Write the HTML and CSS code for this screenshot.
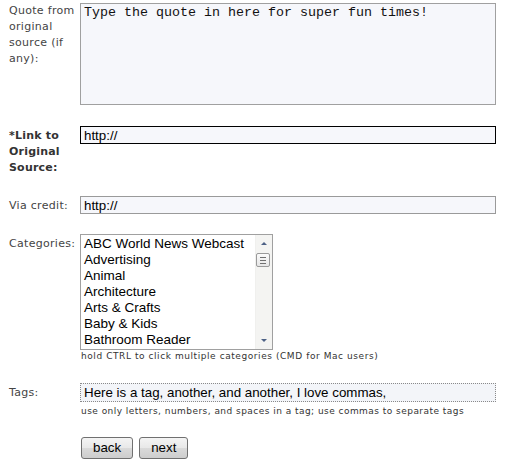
FILE: index.html
```html
<!DOCTYPE html>
<html>
<head>
<meta charset="utf-8">
<link rel="stylesheet" href="styles.css">
</head>
<body>
<form class="form">
  <div class="row row-quote">
    <label class="lbl">Quote from original source (if any):</label>
    <div class="field">
      <textarea class="quote">Type the quote in here for super fun times!</textarea>
    </div>
  </div>
  <div class="row row-link">
    <label class="lbl lbl-bold">*Link to Original Source:</label>
    <div class="field">
      <input class="txt txt-active" type="text" value="http://">
    </div>
  </div>
  <div class="row row-via">
    <label class="lbl lbl-pad">Via credit:</label>
    <div class="field">
      <input class="txt" type="text" value="http://">
    </div>
  </div>
  <div class="row row-cat">
    <label class="lbl lbl-pad">Categories:</label>
    <div class="field">
      <div class="listbox">
        <ul class="options">
          <li>ABC World News Webcast</li>
          <li>Advertising</li>
          <li>Animal</li>
          <li>Architecture</li>
          <li>Arts &amp; Crafts</li>
          <li>Baby &amp; Kids</li>
          <li>Bathroom Reader</li>
        </ul>
        <div class="scrollbar">
          <div class="arrow arrow-up"></div>
          <div class="track">
            <div class="thumb"><span></span><span></span><span></span></div>
          </div>
          <div class="arrow arrow-down"></div>
        </div>
      </div>
      <div class="hint">hold CTRL to click multiple categories (CMD for Mac users)</div>
    </div>
  </div>
  <div class="row row-tags">
    <label class="lbl lbl-pad">Tags:</label>
    <div class="field">
      <input class="txt tags" type="text" value="Here is a tag, another, and another, I love commas,">
      <div class="hint hint-tags">use only letters, numbers, and spaces in a tag; use commas to separate tags</div>
    </div>
  </div>
  <div class="row row-buttons">
    <div class="lbl"></div>
    <div class="field buttons">
      <button type="button" class="btn">back</button>
      <button type="button" class="btn">next</button>
    </div>
  </div>
</form>
</body>
</html>
```

FILE: styles.css
```css
html, body {
  margin: 0;
  padding: 0;
  background: #ffffff;
}

.form {
  padding: 3px 0 0 9px;
  font-family: "DejaVu Sans", Verdana, sans-serif;
  font-size: 11px;
  line-height: 16px;
  color: #444444;
}

.row {
  display: flex;
  align-items: flex-start;
}

.lbl {
  flex: 0 0 71px;
  box-sizing: border-box;
  padding-right: 1px;
  letter-spacing: 0.3px;
}

.lbl-bold {
  font-weight: bold;
  color: #333333;
  padding-top: 2px;
  letter-spacing: 0.2px;
}

.lbl-pad {
  padding-top: 2px;
}

.field {
  width: 416px;
}

.row-link { margin-top: 21px; }
.row-via { margin-top: 20px; }
.row-cat { margin-top: 20px; }
.row-tags { margin-top: 21px; }
.row-buttons { margin-top: 20px; }

.quote {
  display: block;
  box-sizing: border-box;
  width: 416px;
  height: 102px;
  margin: 0;
  padding: 1px 3px;
  border: 1px solid #a0a0a0;
  background: #f6f7fb;
  font-family: "Liberation Mono", "Courier New", monospace;
  font-size: 13.33px;
  line-height: 15px;
  color: #111111;
  resize: none;
  outline: none;
}

.txt {
  display: block;
  box-sizing: border-box;
  width: 416px;
  height: 18px;
  margin: 0;
  padding: 0 3px;
  border: 1px solid #9a9a9a;
  background: #f6f7fb;
  font-family: "Liberation Sans", Arial, sans-serif;
  font-size: 13.33px;
  color: #000000;
  outline: none;
}

.txt-active {
  border-color: #000000;
}

.tags {
  height: 19px;
  border: 1px dotted #8a8a8a;
  background: #f3f5f9;
}

.listbox {
  display: flex;
  box-sizing: border-box;
  width: 193px;
  height: 116px;
  border: 1px solid #a0a0a0;
  background: #ffffff;
}

.options {
  flex: 1;
  margin: 0;
  padding: 1px 0 0 3px;
  list-style: none;
  font-family: "Liberation Sans", Arial, sans-serif;
  font-size: 13.5px;
  line-height: 16px;
  color: #000000;
  white-space: nowrap;
  overflow: hidden;
}

.scrollbar {
  display: flex;
  flex-direction: column;
  width: 16px;
  background: #f4f4f2;
  border-left: 1px solid #f0f0ee;
}

.arrow {
  height: 16px;
  position: relative;
}

.arrow::after {
  content: "";
  position: absolute;
  left: 5px;
  width: 0;
  height: 0;
  border-left: 3px solid transparent;
  border-right: 3px solid transparent;
}

.arrow-up::after {
  top: 7px;
  border-bottom: 3px solid #4d6185;
}

.arrow-down::after {
  top: 6px;
  border-top: 3px solid #4d6185;
}

.track {
  flex: 1;
  padding-top: 2px;
}

.thumb {
  box-sizing: border-box;
  width: 14px;
  height: 14px;
  border: 1px solid #9a9a9a;
  border-radius: 2px;
  background: linear-gradient(#fbfbfb, #e6e6e6);
  display: flex;
  flex-direction: column;
  justify-content: center;
  align-items: center;
  gap: 2px;
}

.thumb span {
  display: block;
  width: 6px;
  height: 1px;
  background: #707070;
}

.hint {
  font-size: 9px;
  line-height: 12px;
  color: #333333;
  letter-spacing: 0.57px;
  padding-left: 1px;
}

.hint-tags {
  margin-top: 3px;
  letter-spacing: 0.46px;
}

.buttons {
  display: flex;
  gap: 6px;
  padding-left: 1px;
}

.btn {
  box-sizing: border-box;
  height: 22px;
  margin: 0;
  padding: 0 11px;
  border: 1px solid #707070;
  border-radius: 3px;
  background: linear-gradient(#f4f4f4, #e8e8e8 50%, #dadada 51%, #cdcdcd);
  font-family: "Liberation Sans", Arial, sans-serif;
  font-size: 13.33px;
  color: #000000;
  line-height: 18px;
}
```
